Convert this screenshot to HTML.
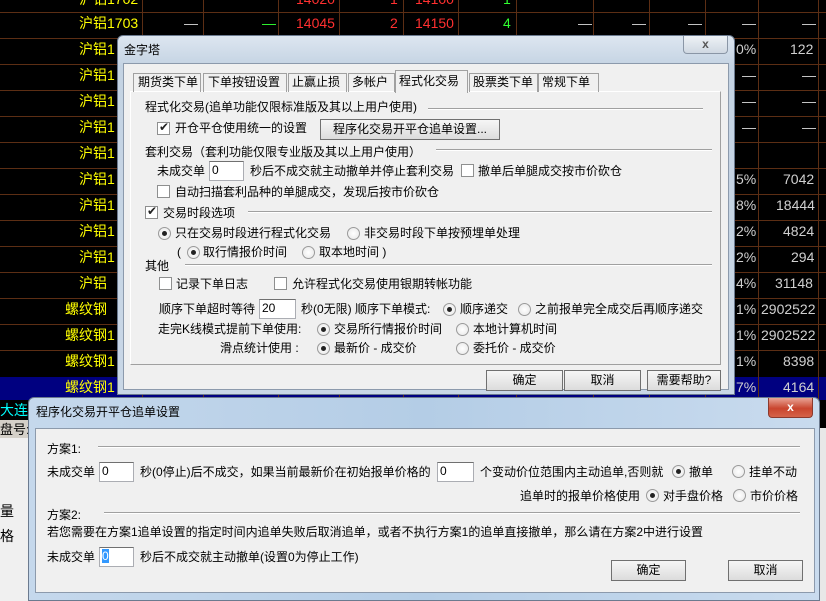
<!DOCTYPE html><html><head><meta charset="utf-8"><style>
*{margin:0;padding:0;box-sizing:border-box}
body{width:826px;height:601px;overflow:hidden;background:#000;position:relative;font-family:"Liberation Sans","Noto Sans CJK SC",sans-serif;font-size:12px;color:#000}
.a{position:absolute;white-space:nowrap;line-height:14px}
.hl{position:absolute;height:1px;background:#5c2e14;left:0;width:826px}
.vl{position:absolute;width:1px;background:#5c2e14;top:0;height:400px}
.g{font-size:14px;font-family:"Liberation Sans","Noto Sans CJK SC",sans-serif}
.y{color:#ffff00}.w{color:#d0d0d0}.r{color:#ff3030}.gr{color:#30ff30}
.cb{position:absolute;width:13px;height:13px;border:1px solid #8e8f8f;background:#fff}
.cb.k::after{content:"✔";position:absolute;left:1px;top:-3px;font-size:12px;color:#222}
.rd{position:absolute;width:13px;height:13px;border-radius:50%;border:1px solid #9a9a9a;background:radial-gradient(#fff,#e6e6e6)}
.rd.k::after{content:"";position:absolute;left:3px;top:3px;width:5px;height:5px;border-radius:50%;background:#222}
.in{position:absolute;height:20px;background:#fff;border:1px solid #abadb3;border-top-color:#707070;padding-left:2px;line-height:17px}
.bt{position:absolute;height:21px;background:linear-gradient(#f6f6f6,#dcdcdc);border:1px solid #707070;text-align:center;line-height:19px}
.sep{position:absolute;height:2px;border-top:1px solid #a0a0a0;border-bottom:1px solid #fff}
</style></head><body>
<div class="hl" style="top:12px"></div><div class="hl" style="top:38px"></div><div class="hl" style="top:64px"></div><div class="hl" style="top:90px"></div><div class="hl" style="top:116px"></div><div class="hl" style="top:142px"></div><div class="hl" style="top:168px"></div><div class="hl" style="top:194px"></div><div class="hl" style="top:220px"></div><div class="hl" style="top:246px"></div><div class="hl" style="top:272px"></div><div class="hl" style="top:298px"></div><div class="hl" style="top:324px"></div><div class="hl" style="top:350px"></div>
<div style="position:absolute;left:0;top:377px;width:826px;height:23px;background:#000080"></div>
<div class="vl" style="left:142px"></div><div class="vl" style="left:203px"></div><div class="vl" style="left:278px"></div><div class="vl" style="left:339px"></div><div class="vl" style="left:403px"></div><div class="vl" style="left:458px"></div><div class="vl" style="left:516px"></div><div class="vl" style="left:593px"></div><div class="vl" style="left:649px"></div><div class="vl" style="left:705px"></div><div class="vl" style="left:758px"></div><div class="vl" style="left:818px"></div>
<div class="a g y" style="left:79px;top:-8px">沪铝1702</div>
<div class="a g r" style="left:296px;top:-8px">14020</div><div class="a g r" style="left:390px;top:-8px">1</div><div class="a g r" style="left:415px;top:-8px">14100</div><div class="a g gr" style="left:503px;top:-8px">1</div>
<div class="a g y" style="left:79px;top:16px">沪铝1703</div>
<div class="a g w" style="left:184px;top:16px">—</div><div class="a g gr" style="left:262px;top:16px">—</div>
<div class="a g r" style="left:296px;top:16px">14045</div><div class="a g r" style="left:390px;top:16px">2</div><div class="a g r" style="left:415px;top:16px">14150</div><div class="a g gr" style="left:503px;top:16px">4</div>
<div class="a g w" style="left:578px;top:16px">—</div><div class="a g w" style="left:632px;top:16px">—</div><div class="a g w" style="left:688px;top:16px">—</div><div class="a g w" style="left:742px;top:16px">—</div><div class="a g w" style="left:802px;top:16px">—</div>
<div class="a g y" style="left:79px;top:42px">沪铝1</div><div class="a g w" style="left:736px;top:42px">0%</div><div class="a g w" style="left:790px;top:42px">122</div>
<div class="a g y" style="left:79px;top:68px">沪铝1</div><div class="a g w" style="left:742px;top:68px">—</div><div class="a g w" style="left:802px;top:68px">—</div>
<div class="a g y" style="left:79px;top:94px">沪铝1</div><div class="a g w" style="left:742px;top:94px">—</div><div class="a g w" style="left:802px;top:94px">—</div>
<div class="a g y" style="left:79px;top:120px">沪铝1</div><div class="a g w" style="left:742px;top:120px">—</div><div class="a g w" style="left:802px;top:120px">—</div>
<div class="a g y" style="left:79px;top:146px">沪铝1</div>
<div class="a g y" style="left:79px;top:172px">沪铝1</div><div class="a g w" style="left:736px;top:172px">5%</div><div class="a g w" style="left:783px;top:172px">7042</div>
<div class="a g y" style="left:79px;top:198px">沪铝1</div><div class="a g w" style="left:736px;top:198px">8%</div><div class="a g w" style="left:776px;top:198px">18444</div>
<div class="a g y" style="left:79px;top:224px">沪铝1</div><div class="a g w" style="left:736px;top:224px">2%</div><div class="a g w" style="left:783px;top:224px">4824</div>
<div class="a g y" style="left:79px;top:250px">沪铝1</div><div class="a g w" style="left:736px;top:250px">2%</div><div class="a g w" style="left:791px;top:250px">294</div>
<div class="a g y" style="left:79px;top:276px">沪铝</div><div class="a g w" style="left:736px;top:276px">4%</div><div class="a g w" style="left:775px;top:276px">31148</div>
<div class="a g y" style="left:65px;top:302px">螺纹钢</div><div class="a g w" style="left:736px;top:302px">1%</div><div class="a g w" style="left:761px;top:302px">2902522</div>
<div class="a g y" style="left:65px;top:328px">螺纹钢1</div><div class="a g w" style="left:736px;top:328px">1%</div><div class="a g w" style="left:761px;top:328px">2902522</div>
<div class="a g y" style="left:65px;top:354px">螺纹钢1</div><div class="a g w" style="left:736px;top:354px">1%</div><div class="a g w" style="left:783px;top:354px">8398</div>
<div class="a g y" style="left:65px;top:380px">螺纹钢1</div><div class="a g w" style="left:736px;top:380px">7%</div><div class="a g w" style="left:783px;top:380px">4164</div>
<div style="position:absolute;left:0;top:400px;width:30px;height:20px;background:#000"></div>
<div class="a g" style="left:0;top:403px;color:#00ffff">大连</div>
<div style="position:absolute;left:0;top:420px;width:30px;height:18px;background:#d4d0c8"></div>
<div class="a" style="left:0;top:423px;font-size:13px">盘号:</div>
<div style="position:absolute;left:0;top:438px;width:30px;height:163px;background:#f0f0f0"></div>
<div class="a" style="left:0;top:504px;font-size:14px">量</div><div class="a" style="left:0;top:529px;font-size:14px">格</div>
<div style="position:absolute;left:815px;top:428px;width:11px;height:173px;background:#e8e8e8"></div>
<div style="position:absolute;left:820px;top:400px;width:6px;height:28px;background:#000"></div>
<div style="position:absolute;left:117px;top:35px;width:618px;height:360px;border:1px solid #6b7a8f;border-radius:6px 6px 0 0;background:linear-gradient(#dde6f0,#c4d3e3 30px,#c9d7e6);"></div>
<div class="a" style="left:124px;top:43px">金字塔</div>
<div style="position:absolute;left:683px;top:36px;width:45px;height:18px;border:1px solid #8a96a6;border-top:none;border-radius:0 0 4px 4px;background:linear-gradient(#eef2f6,#cfd8e2);text-align:center;font-weight:bold;color:#555;line-height:16px">x</div>
<div style="position:absolute;left:123px;top:63px;width:606px;height:327px;background:#f0f0f0;border:1px solid #8c9aac"></div>
<div style="position:absolute;left:130px;top:91px;width:591px;height:274px;border:1px solid #fff;border-right-color:#a0a0a0;border-bottom-color:#a0a0a0;"></div>
<div class="a" style="left:133px;top:73px;height:19px;width:68px;border:1px solid #a0a0a0;border-bottom:none;padding-left:4px;line-height:17px">期货类下单</div>
<div class="a" style="left:203px;top:73px;height:19px;width:84px;border:1px solid #a0a0a0;border-bottom:none;padding-left:4px;line-height:17px">下单按钮设置</div>
<div class="a" style="left:288px;top:73px;height:19px;width:59px;border:1px solid #a0a0a0;border-bottom:none;padding-left:3px;line-height:17px">止赢止损</div>
<div class="a" style="left:348px;top:73px;height:19px;width:47px;border:1px solid #a0a0a0;border-bottom:none;padding-left:3px;line-height:17px">多帐户</div>
<div class="a" style="left:395px;top:70px;height:23px;width:73px;border:1px solid #a0a0a0;border-bottom:none;background:#f0f0f0;padding-left:3px;line-height:20px">程式化交易</div>
<div class="a" style="left:469px;top:73px;height:19px;width:69px;border:1px solid #a0a0a0;border-bottom:none;padding-left:3px;line-height:17px">股票类下单</div>
<div class="a" style="left:538px;top:73px;height:19px;width:61px;border:1px solid #a0a0a0;border-bottom:none;padding-left:3px;line-height:17px">常规下单</div>
<div class="a" style="left:145px;top:100px">程式化交易(追单功能仅限标准版及其以上用户使用)</div><div class="sep" style="left:428px;top:108px;width:275px"></div>
<div class="cb k" style="left:157px;top:122px"></div><div class="a" style="left:175px;top:121px">开仓平仓使用统一的设置</div>
<div class="bt" style="left:320px;top:119px;width:180px">程序化交易开平仓追单设置...</div>
<div class="a" style="left:145px;top:145px">套利交易（套利功能仅限专业版及其以上用户使用）</div><div class="sep" style="left:436px;top:149px;width:276px"></div>
<div class="a" style="left:157px;top:164px">未成交单</div><div class="in" style="left:209px;top:161px;width:35px">0</div>
<div class="a" style="left:250px;top:164px">秒后不成交就主动撤单并停止套利交易</div>
<div class="cb" style="left:461px;top:164px"></div><div class="a" style="left:478px;top:164px">撤单后单腿成交按市价砍仓</div>
<div class="cb" style="left:157px;top:185px"></div><div class="a" style="left:175px;top:185px">自动扫描套利品种的单腿成交，发现后按市价砍仓</div>
<div class="cb k" style="left:145px;top:206px"></div><div class="a" style="left:163px;top:206px">交易时段选项</div><div class="sep" style="left:248px;top:211px;width:464px"></div>
<div class="rd k" style="left:158px;top:227px"></div><div class="a" style="left:175px;top:226px">只在交易时段进行程式化交易</div>
<div class="rd" style="left:347px;top:227px"></div><div class="a" style="left:364px;top:226px">非交易时段下单按预埋单处理</div>
<div class="a" style="left:177px;top:245px">(</div><div class="rd k" style="left:187px;top:246px"></div><div class="a" style="left:203px;top:245px">取行情报价时间</div>
<div class="rd" style="left:302px;top:246px"></div><div class="a" style="left:319px;top:245px">取本地时间 )</div>
<div class="a" style="left:145px;top:259px">其他</div><div class="sep" style="left:185px;top:264px;width:527px"></div>
<div class="cb" style="left:159px;top:277px"></div><div class="a" style="left:176px;top:277px">记录下单日志</div>
<div class="cb" style="left:274px;top:277px"></div><div class="a" style="left:292px;top:277px">允许程式化交易使用银期转帐功能</div>
<div class="a" style="left:159px;top:302px">顺序下单超时等待</div><div class="in" style="left:259px;top:299px;width:37px">20</div>
<div class="a" style="left:301px;top:302px">秒(0无限) 顺序下单模式:</div>
<div class="rd k" style="left:443px;top:303px"></div><div class="a" style="left:460px;top:302px">顺序递交</div>
<div class="rd" style="left:518px;top:303px"></div><div class="a" style="left:535px;top:302px">之前报单完全成交后再顺序递交</div>
<div class="a" style="left:158px;top:322px">走完K线模式提前下单使用:</div>
<div class="rd k" style="left:317px;top:323px"></div><div class="a" style="left:334px;top:322px">交易所行情报价时间</div>
<div class="rd" style="left:456px;top:323px"></div><div class="a" style="left:473px;top:322px">本地计算机时间</div>
<div class="a" style="left:220px;top:341px">滑点统计使用 :</div>
<div class="rd k" style="left:317px;top:342px"></div><div class="a" style="left:334px;top:341px">最新价 - 成交价</div>
<div class="rd" style="left:456px;top:342px"></div><div class="a" style="left:473px;top:341px">委托价 - 成交价</div>
<div class="bt" style="left:486px;top:370px;width:77px">确定</div>
<div class="bt" style="left:564px;top:370px;width:77px">取消</div>
<div class="bt" style="left:647px;top:370px;width:74px">需要帮助?</div>
<div style="position:absolute;left:28px;top:397px;width:792px;height:204px;border:1px solid #6b7a8f;border-radius:6px 6px 0 0;background:linear-gradient(90deg,#c5d8ec,#b4cde6 50%,#c9dbee)"></div>
<div class="a" style="left:36px;top:405px">程序化交易开平仓追单设置</div>
<div style="position:absolute;left:768px;top:398px;width:45px;height:20px;border:1px solid #8b3a2e;border-top:none;border-radius:0 0 4px 4px;background:linear-gradient(#e9a496,#c9452e 55%,#d5634a);text-align:center;font-weight:bold;color:#fff;line-height:18px">x</div>
<div style="position:absolute;left:35px;top:428px;width:780px;height:165px;background:#f0f0f0;border:1px solid #8c9aac"></div>
<div class="a" style="left:47px;top:442px">方案1:</div><div class="sep" style="left:98px;top:446px;width:702px"></div>
<div class="a" style="left:47px;top:465px">未成交单</div><div class="in" style="left:99px;top:462px;width:35px">0</div>
<div class="a" style="left:140px;top:465px">秒(0停止)后不成交，如果当前最新价在初始报单价格的</div>
<div class="in" style="left:437px;top:462px;width:37px">0</div>
<div class="a" style="left:480px;top:465px">个变动价位范围内主动追单,否则就</div>
<div class="rd k" style="left:672px;top:465px"></div><div class="a" style="left:689px;top:465px">撤单</div>
<div class="rd" style="left:732px;top:465px"></div><div class="a" style="left:749px;top:465px">挂单不动</div>
<div class="a" style="left:520px;top:489px">追单时的报单价格使用</div>
<div class="rd k" style="left:646px;top:489px"></div><div class="a" style="left:663px;top:489px">对手盘价格</div>
<div class="rd" style="left:733px;top:489px"></div><div class="a" style="left:750px;top:489px">市价价格</div>
<div class="a" style="left:47px;top:508px">方案2:</div><div class="sep" style="left:104px;top:512px;width:696px"></div>
<div class="a" style="left:47px;top:525px">若您需要在方案1追单设置的指定时间内追单失败后取消追单，或者不执行方案1的追单直接撤单，那么请在方案2中进行设置</div>
<div class="a" style="left:47px;top:550px">未成交单</div><div class="in" style="left:99px;top:547px;width:35px"><span style="background:#3399ff;color:#fff">0</span></div>
<div class="a" style="left:140px;top:550px">秒后不成交就主动撤单(设置0为停止工作)</div>
<div class="bt" style="left:611px;top:560px;width:75px">确定</div>
<div class="bt" style="left:728px;top:560px;width:75px">取消</div>
</body></html>
